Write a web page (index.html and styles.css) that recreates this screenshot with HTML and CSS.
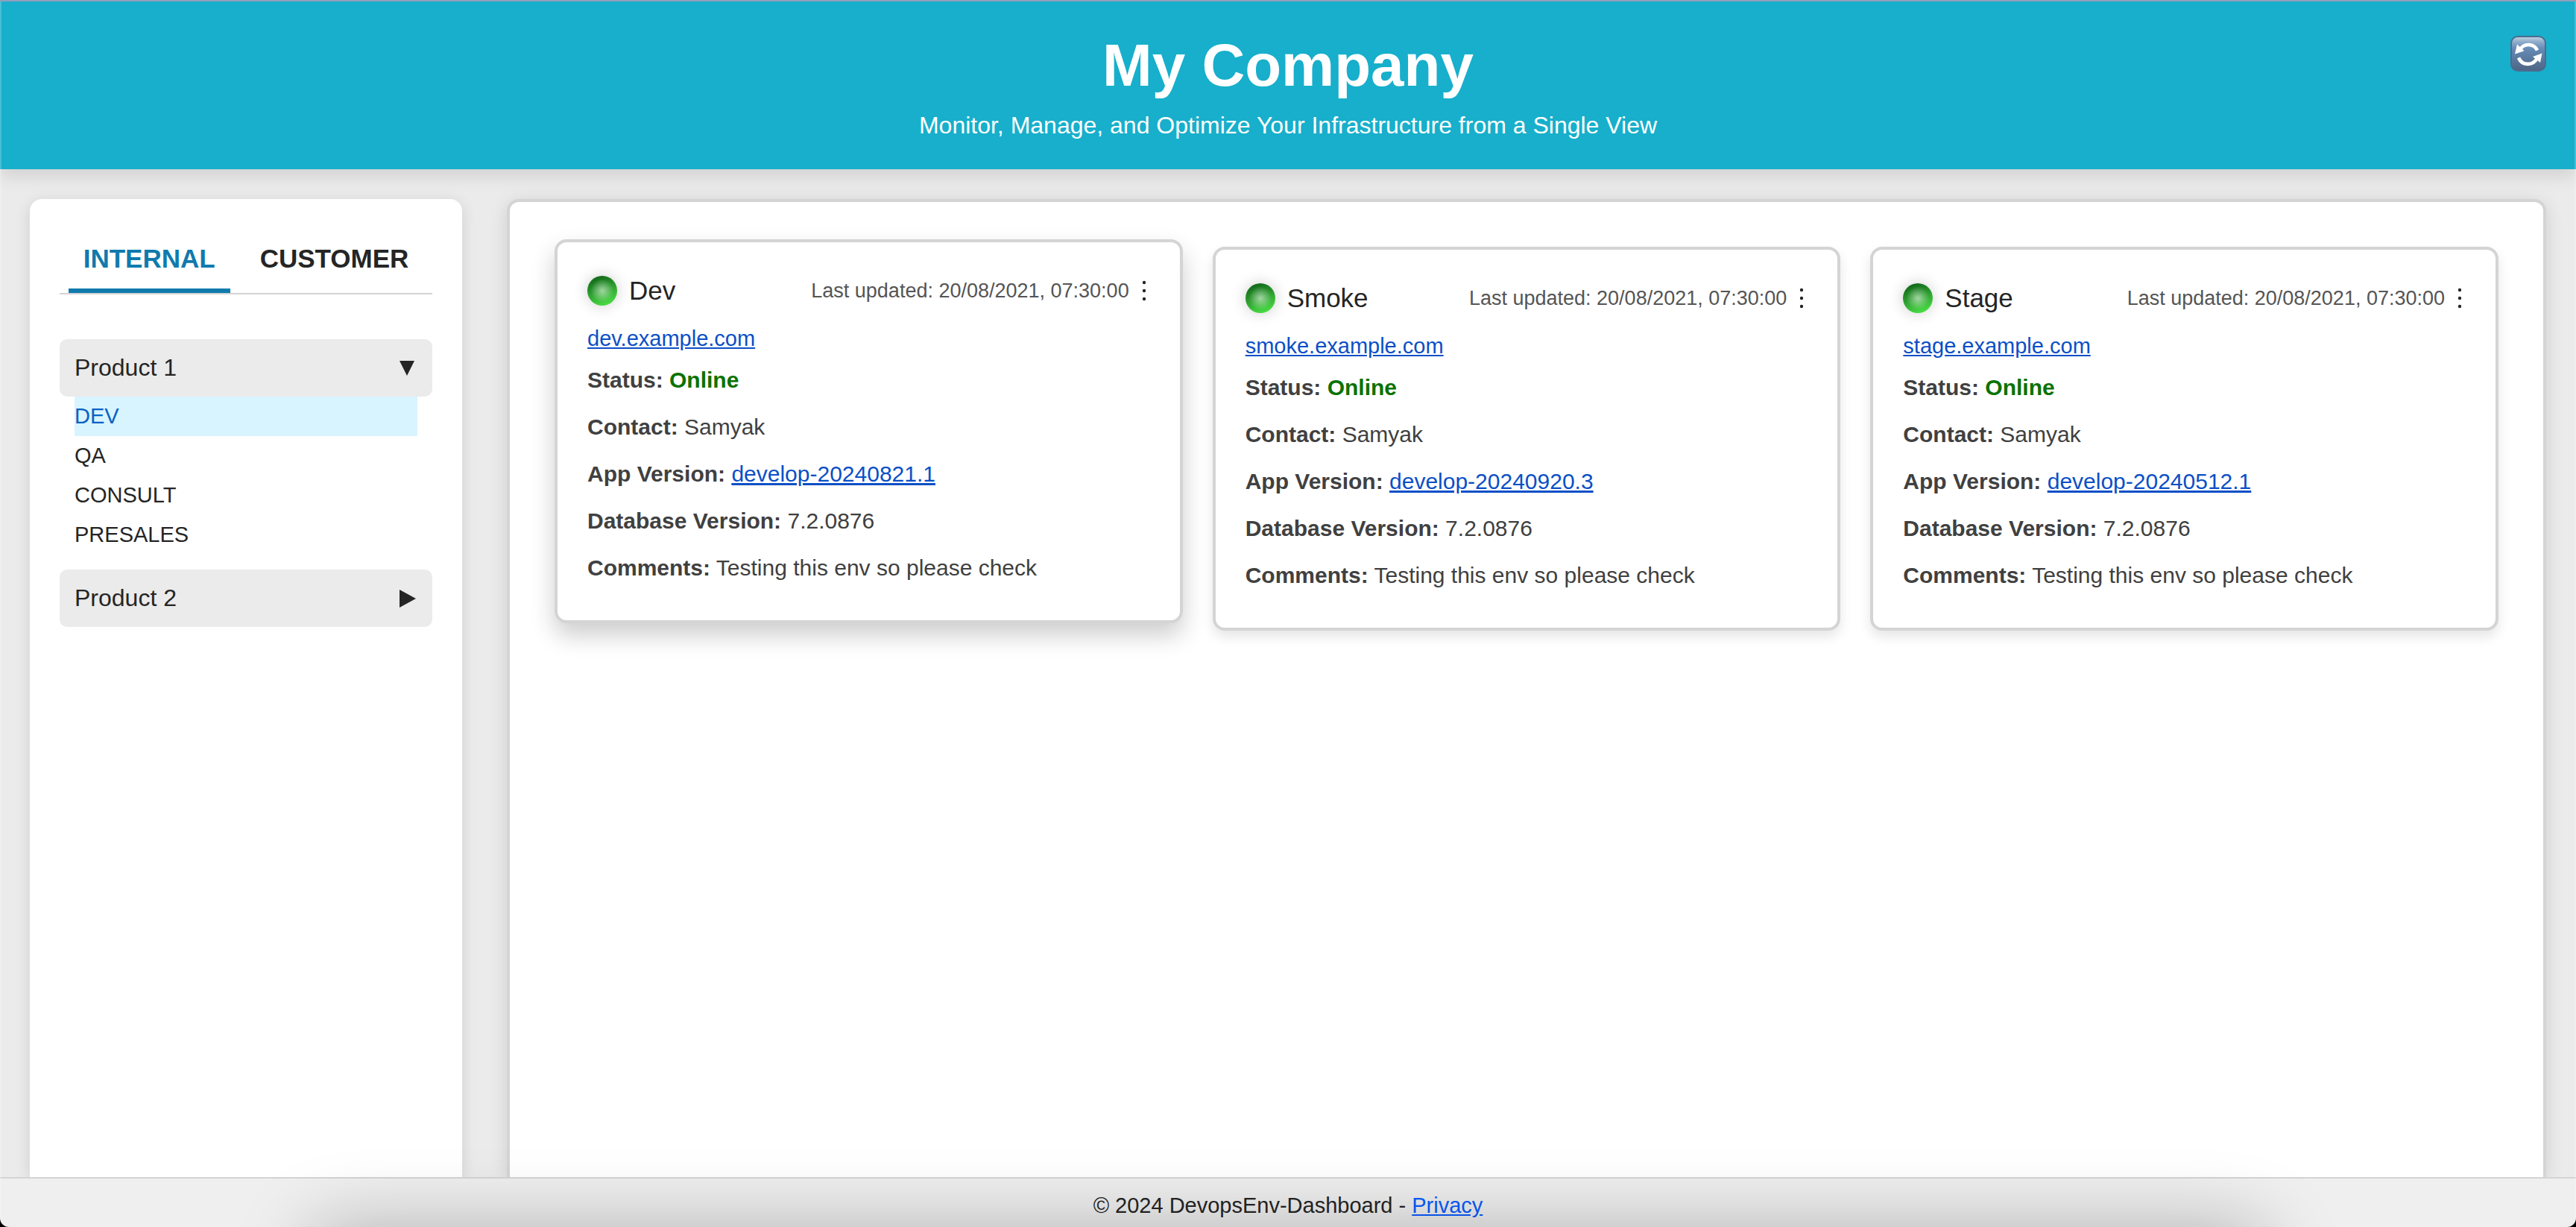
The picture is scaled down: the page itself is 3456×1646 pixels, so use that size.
FILE: index.html
```html
<!DOCTYPE html>
<html lang="en">
<head>
<meta charset="utf-8">
<meta name="viewport" content="width=device-width, initial-scale=1">
<title>DevopsEnv-Dashboard</title>
<link rel="stylesheet" href="styles.css">
</head>
<body>
<header class="banner">
  <h1 class="banner-title">My Company</h1>
  <p class="banner-text">Monitor, Manage, and Optimize Your Infrastructure from a Single View</p>
  <button class="refresh" type="button" aria-label="Refresh">
    <svg viewBox="0 0 48 48" width="48" height="48" aria-hidden="true">
      <defs>
        <linearGradient id="key" x1="0" y1="0" x2="0" y2="1">
          <stop offset="0" stop-color="#c3d3e2"/>
          <stop offset=".16" stop-color="#8eacca"/>
          <stop offset=".35" stop-color="#668bb5"/>
          <stop offset="1" stop-color="#4d6585"/>
        </linearGradient>
      </defs>
      <rect x="1" y="1" width="46" height="46" rx="9" fill="url(#key)" stroke="#4a6c8f" stroke-width="2"/>
      <path d="M12.5 19.5A13 13 0 0 1 36 19.5" fill="none" stroke="#fff" stroke-width="4.6"/>
      <path d="M11 29.5A13.5 13.5 0 0 0 35.5 30.5" fill="none" stroke="#fff" stroke-width="4.6"/>
      <path d="M9 11.5L6 24.5L18.5 20.2Z" fill="#fff"/>
      <path d="M42.5 23.5L30 28L40 36Z" fill="#fff"/>
    </svg>
  </button>
</header>

<div class="layout">
  <aside class="sidebar">
    <div class="tabs" role="tablist">
      <button class="tab tab-active" type="button" role="tab" aria-selected="true">INTERNAL</button>
      <button class="tab" type="button" role="tab" aria-selected="false">CUSTOMER</button>
    </div>
    <nav class="products">
      <button class="product" type="button" aria-expanded="true">Product 1
        <svg class="caret" viewBox="0 0 24 24" aria-hidden="true"><path d="M2 2H22L12 22Z"/></svg>
      </button>
      <ul class="envs">
        <li><a class="env env-active" href="#dev">DEV</a></li>
        <li><a class="env" href="#qa">QA</a></li>
        <li><a class="env" href="#consult">CONSULT</a></li>
        <li><a class="env" href="#presales">PRESALES</a></li>
      </ul>
      <button class="product" type="button" aria-expanded="false">Product 2
        <svg class="caret" viewBox="0 0 24 24" aria-hidden="true"><path d="M2 0L24 12L2 24Z"/></svg>
      </button>
    </nav>
  </aside>

  <main class="content">
    <article class="card card-raised">
      <header class="card-head">
        <span class="light"></span>
        <h2 class="card-title">Dev</h2>
        <span class="updated">Last updated: 20/08/2021, 07:30:00</span>
        <button class="menu" type="button" aria-label="Dev options"><svg viewBox="0 0 16 30" aria-hidden="true"><circle cx="8" cy="4" r="2.2"/><circle cx="8" cy="15" r="2.2"/><circle cx="8" cy="26" r="2.2"/></svg></button>
      </header>
      <a class="url" href="#dev">dev.example.com</a>
      <p class="field"><strong>Status:</strong> <strong class="online">Online</strong></p>
      <p class="field"><strong>Contact:</strong> Samyak</p>
      <p class="field"><strong>App Version:</strong> <a href="#app-dev">develop-20240821.1</a></p>
      <p class="field"><strong>Database Version:</strong> 7.2.0876</p>
      <p class="field"><strong>Comments:</strong> Testing this env so please check</p>
    </article>
    <article class="card">
      <header class="card-head">
        <span class="light"></span>
        <h2 class="card-title">Smoke</h2>
        <span class="updated">Last updated: 20/08/2021, 07:30:00</span>
        <button class="menu" type="button" aria-label="Smoke options"><svg viewBox="0 0 16 30" aria-hidden="true"><circle cx="8" cy="4" r="2.2"/><circle cx="8" cy="15" r="2.2"/><circle cx="8" cy="26" r="2.2"/></svg></button>
      </header>
      <a class="url" href="#smoke">smoke.example.com</a>
      <p class="field"><strong>Status:</strong> <strong class="online">Online</strong></p>
      <p class="field"><strong>Contact:</strong> Samyak</p>
      <p class="field"><strong>App Version:</strong> <a href="#app-smoke">develop-20240920.3</a></p>
      <p class="field"><strong>Database Version:</strong> 7.2.0876</p>
      <p class="field"><strong>Comments:</strong> Testing this env so please check</p>
    </article>
    <article class="card">
      <header class="card-head">
        <span class="light"></span>
        <h2 class="card-title">Stage</h2>
        <span class="updated">Last updated: 20/08/2021, 07:30:00</span>
        <button class="menu" type="button" aria-label="Stage options"><svg viewBox="0 0 16 30" aria-hidden="true"><circle cx="8" cy="4" r="2.2"/><circle cx="8" cy="15" r="2.2"/><circle cx="8" cy="26" r="2.2"/></svg></button>
      </header>
      <a class="url" href="#stage">stage.example.com</a>
      <p class="field"><strong>Status:</strong> <strong class="online">Online</strong></p>
      <p class="field"><strong>Contact:</strong> Samyak</p>
      <p class="field"><strong>App Version:</strong> <a href="#app-stage">develop-20240512.1</a></p>
      <p class="field"><strong>Database Version:</strong> 7.2.0876</p>
      <p class="field"><strong>Comments:</strong> Testing this env so please check</p>
    </article>
  </main>
</div>

<footer class="footer">© 2024 DevopsEnv-Dashboard - <a class="privacy" href="#privacy">Privacy</a></footer>
<div class="dock-shade"></div>
<div class="frame"></div>
<div class="corners"></div>
</body>
</html>
```
FILE: styles.css
```css
* { box-sizing: border-box; }

body {
  margin: 0;
  min-height: 100vh;
  display: flex;
  flex-direction: column;
  background: #ebebeb;
  color: #252525;
  font-family: "Liberation Sans", Arial, sans-serif;
  font-size: 32px;
}

h1, h2, p, ul { margin: 0; padding: 0; }

button {
  border: 0;
  padding: 0;
  background: none;
  color: inherit;
  font: inherit;
  cursor: pointer;
}

/* Banner */
.banner {
  position: relative;
  z-index: 1;
  display: flex;
  flex-direction: column;
  align-items: center;
  gap: 16px;
  padding: 40px;
  border-top: 2px solid #939fbc;
  background: #17afcb;
  color: #fff;
  box-shadow: 0 8px 24px rgba(0, 0, 0, .12);
}
.banner-title { font-size: 80px; line-height: 92px; }
.banner-text { line-height: 37px; }
.refresh {
  position: absolute;
  top: 46px;
  right: 40px;
  width: 48px;
  height: 48px;
}
.refresh svg { display: block; }

.layout {
  flex: 1;
  display: flex;
  gap: 60px;
  padding: 40px 40px 0;
}

/* Sidebar */
.sidebar {
  flex: 0 0 580px;
  padding: 40px;
  border-radius: 16px 16px 0 0;
  background: #fff;
  box-shadow: 0 4px 20px rgba(0, 0, 0, .12);
}
.tabs {
  display: flex;
  justify-content: center;
  gap: 20px;
  border-bottom: 2px solid #d4d4d4;
  margin-bottom: 60px;
}
.tab {
  padding: 20px;
  border-bottom: 6px solid transparent;
  font-size: 35px;
  line-height: 40px;
  font-weight: 700;
}
.tab-active { color: #107aad; border-bottom-color: #107aad; }
.product {
  display: flex;
  align-items: center;
  justify-content: space-between;
  width: 100%;
  padding: 20px 22px 20px 20px;
  border-radius: 10px;
  background: #ebebeb;
  line-height: 37px;
}
.caret { width: 24px; height: 24px; fill: #252525; }
.envs { list-style: none; padding: 0 20px 20px; }
.env {
  display: block;
  padding: 10px 0;
  color: inherit;
  font-size: 29px;
  line-height: 33px;
  text-decoration: none;
}
.env-active { background: #d8f4ff; color: #0b62c4; }

/* Environment cards */
.content {
  flex: 1;
  display: grid;
  grid-template-columns: repeat(3, minmax(0, 1fr));
  align-items: start;
  gap: 40px;
  padding: 60px;
  border: 4px solid #d4d4d4;
  border-bottom: 0;
  border-radius: 16px 16px 0 0;
  background: #fff;
  box-shadow: 0 4px 24px rgba(0, 0, 0, .12);
}
.card {
  padding: 40px;
  border: 4px solid #d4d4d4;
  border-radius: 16px;
  background: #fff;
  color: #404040;
  box-shadow: 0 8px 16px rgba(0, 0, 0, .1);
}
.card-raised {
  transform: translateY(-10px);
  box-shadow: 0 16px 32px rgba(0, 0, 0, .2);
}
.card-head { display: flex; align-items: center; height: 50px; }
.light {
  width: 40px;
  height: 40px;
  margin-right: 16px;
  border-radius: 50%;
  background:
    radial-gradient(circle, rgba(255, 255, 255, .55), rgba(255, 255, 255, 0) 55%),
    linear-gradient(160deg, #0a5a14, #33a833 55%, #4fee4a);
  box-shadow: 0 0 20px rgba(0, 0, 0, .2);
}
.card-title { color: #252525; font-size: 35px; font-weight: 400; line-height: 40px; }
.updated { margin-left: auto; color: #555; font-size: 27px; }
.menu { width: 16px; height: 30px; margin-left: 12px; }
.menu svg { display: block; width: 16px; height: 30px; fill: #252525; }
.url {
  display: block;
  width: fit-content;
  margin: 18px 0 12px;
  font-size: 29px;
  line-height: 43px;
}
.card a { color: #0b4fc6; }
.field { margin-bottom: 20px; font-size: 30px; line-height: 43px; }
.field:last-child { margin-bottom: 9px; }
.card .online { color: #0a7200; }

/* Footer */
.footer {
  position: relative;
  z-index: 1;
  padding: 20px 20px 12px;
  border-top: 2px solid #d4d4d4;
  background: #efefef;
  font-size: 29px;
  line-height: 33px;
  text-align: center;
}
.privacy { color: #0a5cff; }

/* Shade of the dock below the window */
.dock-shade {
  position: fixed;
  z-index: 0;
  top: 100%;
  left: 12%;
  right: 12%;
  height: 120px;
  border-radius: 40px;
  box-shadow: 0 0 100px rgba(0, 0, 0, .26);
  pointer-events: none;
}
.footer + .dock-shade { z-index: 2; }

/* Window edge and its rounded lower corners */
.frame {
  position: fixed;
  z-index: 3;
  inset: 2px 0 0;
  border: solid rgba(255, 255, 255, .2);
  border-width: 0 2px;
  pointer-events: none;
}
.corners {
  position: fixed;
  z-index: 4;
  left: 0;
  right: 0;
  bottom: 0;
  height: 16px;
  overflow: hidden;
  pointer-events: none;
}
.corners::before {
  content: "";
  display: block;
  height: 16px;
  border-radius: 0 0 12px 12px;
  box-shadow: 0 0 0 32px #000;
}
```
